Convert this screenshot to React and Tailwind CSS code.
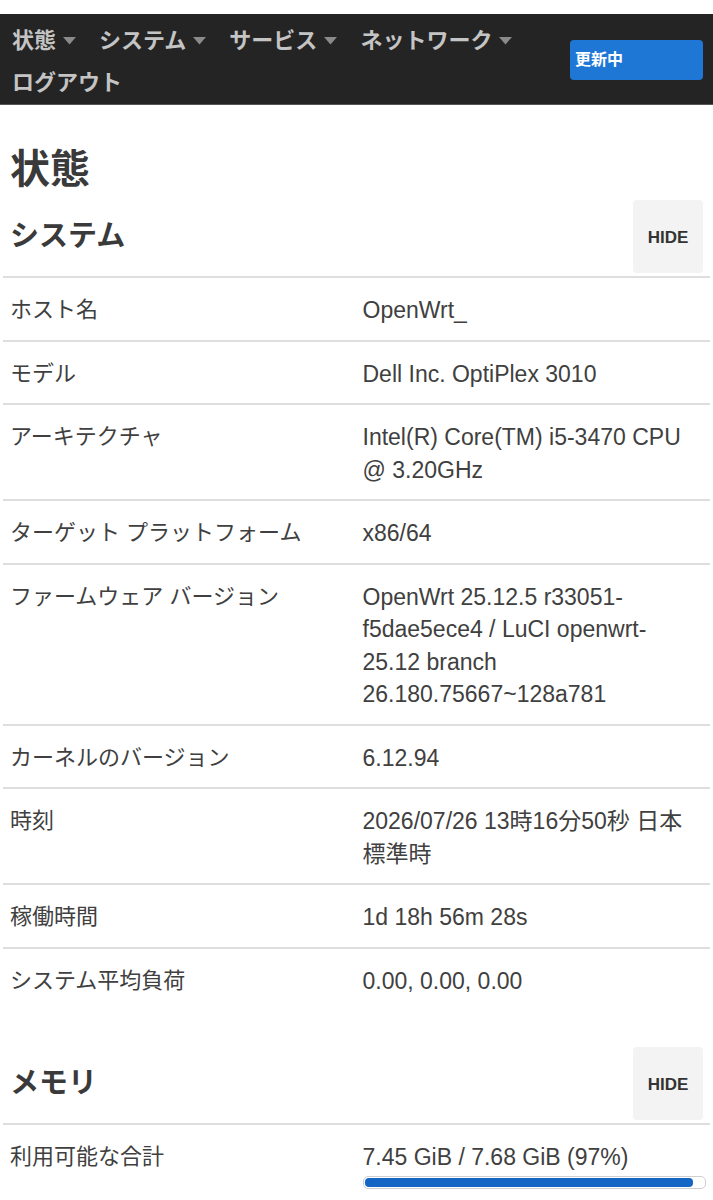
import React from "react";

const FONT = { fontFamily: '"Liberation Sans", "Noto Sans CJK JP", sans-serif' };

const navItems = ["状態", "システム", "サービス", "ネットワーク"];

const rows = [
  ["ホスト名", ["OpenWrt_"]],
  ["モデル", ["Dell Inc. OptiPlex 3010"]],
  ["アーキテクチャ", ["Intel(R) Core(TM) i5-3470 CPU", "@ 3.20GHz"]],
  ["ターゲット プラットフォーム", ["x86/64"]],
  [
    "ファームウェア バージョン",
    ["OpenWrt 25.12.5 r33051-", "f5dae5ece4 / LuCI openwrt-", "25.12 branch", "26.180.75667~128a781"],
  ],
  ["カーネルのバージョン", ["6.12.94"]],
  ["時刻", ["2026/07/26 13時16分50秒 日本", "標準時"]],
  ["稼働時間", ["1d 18h 56m 28s"]],
  ["システム平均負荷", ["0.00, 0.00, 0.00"]],
];

function Caret() {
  return (
    <svg width="13" height="8" viewBox="0 0 13 8" className="ml-[7px] mt-[2px]">
      <path d="M0 0 L13 0 L6.5 7.5 Z" fill="#8a8a8a" />
    </svg>
  );
}

function SectionHeader({ title }) {
  return (
    <div className="flex items-center justify-between pl-[10px] pr-[10px] mb-[3px]">
      <h3 className="text-[29px] font-bold text-[#3a3a3a] leading-none">{title}</h3>
      <button className="w-[70px] h-[73px] bg-[#f3f3f3] rounded-[4px] text-[17px] font-bold text-[#333] flex items-center justify-center pt-[3px]">
        HIDE
      </button>
    </div>
  );
}

function Row({ label, lines }) {
  return (
    <div className="grid grid-cols-2 border-t-2 border-[#dedede]">
      <div className="px-[7px] pt-[16px] pb-[13px] text-[22px] leading-[32.5px] text-[#404040]">{label}</div>
      <div className="px-[6px] pt-[16px] pb-[13px] text-[23px] leading-[32.5px] text-[#404040]">
        {lines.map((l, i) => (
          <div key={i} className="whitespace-nowrap">{l}</div>
        ))}
      </div>
    </div>
  );
}

export default function App() {
  return (
    <div className="bg-white min-h-[1200px] pt-[14px]" style={FONT}>
      <nav className="bg-[#242424] h-[91px] flex items-start justify-between pt-[5px] border-b border-[#555]">
        <div className="flex flex-wrap w-[545px] pl-[12px]">
          {navItems.map((n) => (
            <div key={n} className="flex items-center h-[42px] mr-[23px] text-[22px] font-bold text-[#c4c4c4]">
              <span>{n}</span>
              <Caret />
            </div>
          ))}
          <div className="flex items-center h-[42px] text-[22px] font-bold text-[#c4c4c4]">ログアウト</div>
        </div>
        <button className="mt-[21px] mr-[10px] w-[133px] h-[40px] bg-[#1f77d5] rounded-[4px] text-white text-[16px] font-bold text-left pl-[5px]">
          更新中
        </button>
      </nav>

      <h2 className="text-[40px] font-bold text-[#3a3a3a] pl-[10px] pt-[42px] leading-[44px] pb-[9px]">状態</h2>

      <SectionHeader title="システム" />
      <div className="mx-[3px]">
        {rows.map(([label, lines]) => (
          <Row key={label} label={label} lines={lines} />
        ))}
      </div>

      <div className="mt-[37px]">
        <SectionHeader title="メモリ" />
        <div className="mx-[3px] grid grid-cols-2 border-t-2 border-[#dedede]">
          <div className="px-[7px] pt-[16px] pb-[13px] text-[22px] leading-[32.5px] text-[#404040]">利用可能な合計</div>
          <div className="px-[6px] pt-[16px] text-[23px] leading-[32.5px] text-[#404040]">
            <div className="whitespace-nowrap">7.45 GiB / 7.68 GiB (97%)</div>
            <div className="mt-[2px] h-[13px] w-[343px] rounded-[5px] border border-[#cfcfcf] bg-white p-[1px]">
              <div className="h-full rounded-[4px] bg-[#1565c5]" style={{ width: "97%" }} />
            </div>
          </div>
        </div>
      </div>
    </div>
  );
}
